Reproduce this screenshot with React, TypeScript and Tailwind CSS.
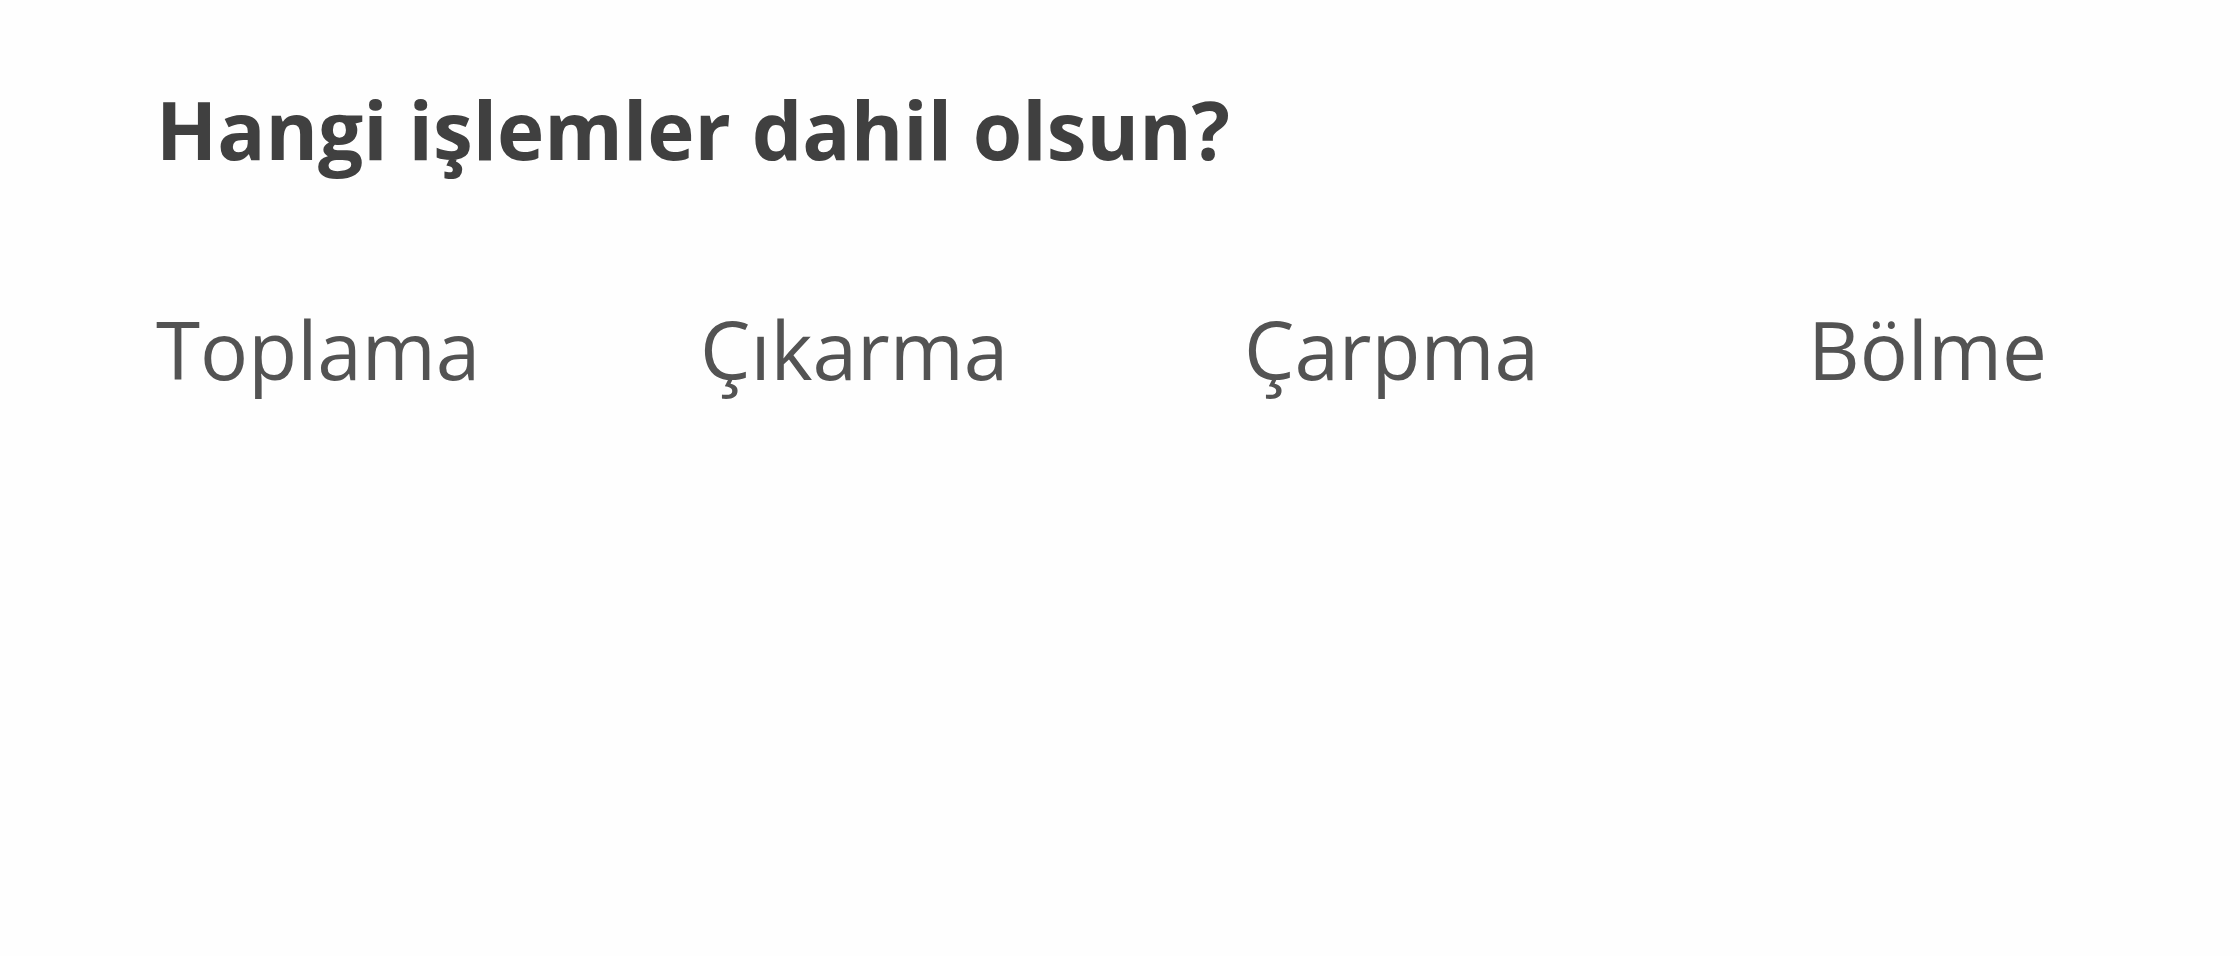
const operations = ["Toplama", "Çıkarma", "Çarpma", "Bölme"];

export default function App() {
  return (
    <main className="min-h-screen bg-[#fefefe] px-[156px] pt-[74px] font-['Open_Sans',sans-serif] text-[80px] leading-[110px]">
      <h1 className="font-bold text-[#404040]">Hangi işlemler dahil olsun?</h1>
      <ul className="mt-[110px] grid grid-cols-[544fr_544fr_564fr_276fr] text-[#535353]">
        {operations.map((name) => (
          <li key={name}>{name}</li>
        ))}
      </ul>
    </main>
  );
}
